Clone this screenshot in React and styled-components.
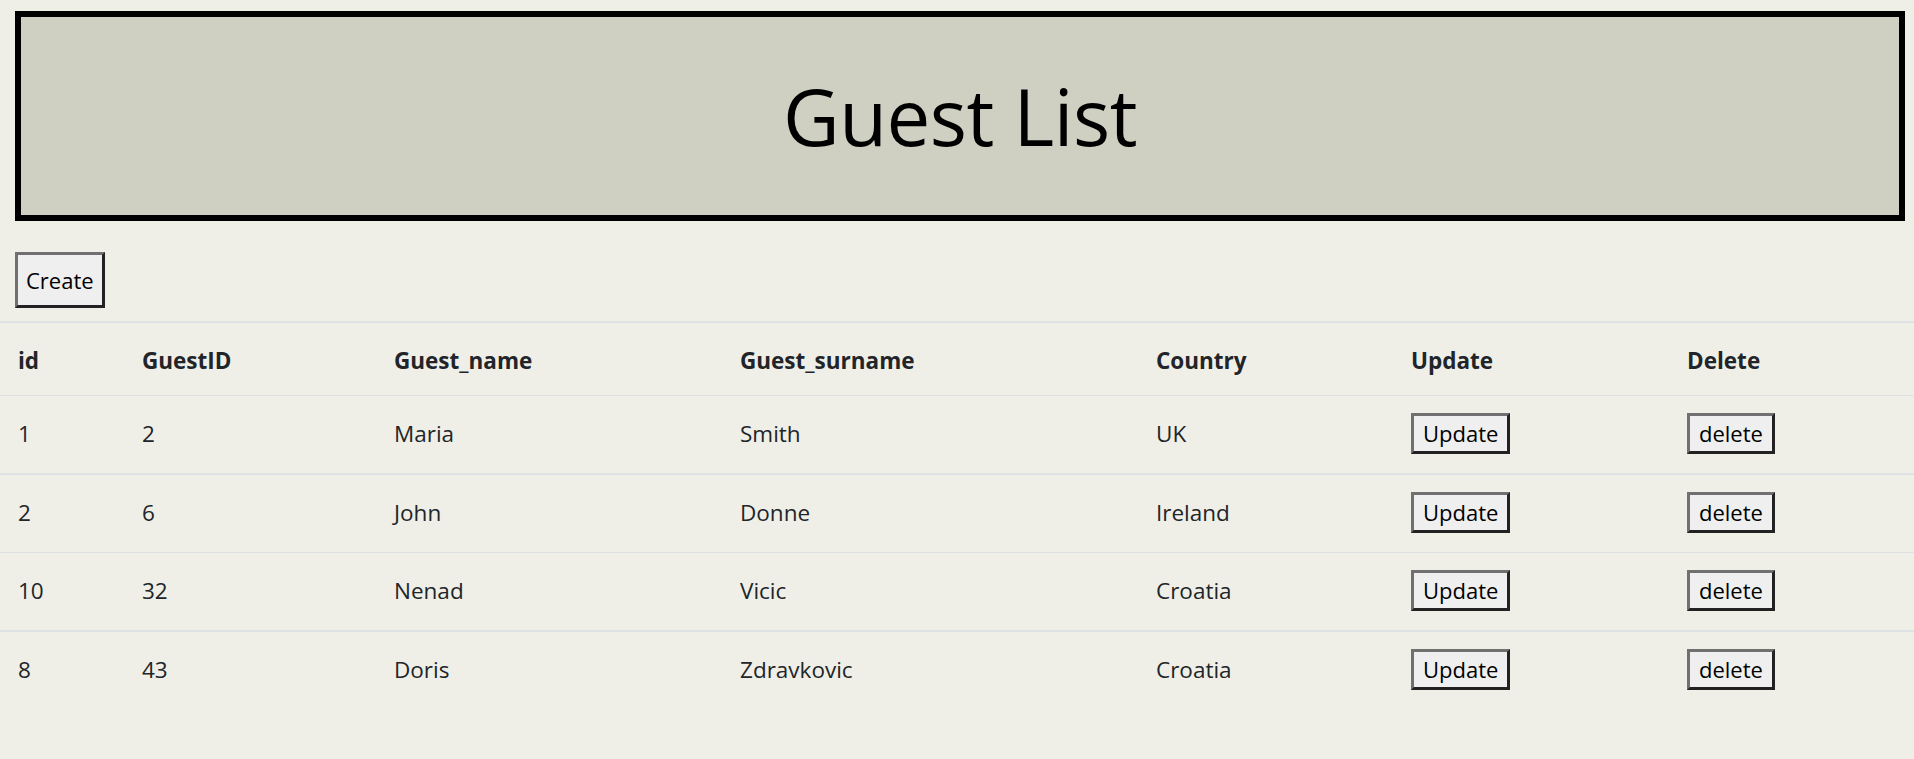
import React from "react";
import styled, { createGlobalStyle } from "styled-components";

const GlobalStyle = createGlobalStyle`
  html, body {
    margin: 0;
    padding: 0;
    background: #efefe8;
  }
  body {
    font-family: "Open Sans", "Noto Sans", sans-serif;
    color: #212529;
  }
`;

const guests = [
  { id: 1, guestId: 2, name: "Maria", surname: "Smith", country: "UK" },
  { id: 2, guestId: 6, name: "John", surname: "Donne", country: "Ireland" },
  { id: 10, guestId: 32, name: "Nenad", surname: "Vicic", country: "Croatia" },
  { id: 8, guestId: 43, name: "Doris", surname: "Zdravkovic", country: "Croatia" },
];

const columns = [
  { label: "id", width: 124 },
  { label: "GuestID", width: 252 },
  { label: "Guest_name", width: 346 },
  { label: "Guest_surname", width: 416 },
  { label: "Country", width: 255 },
  { label: "Update", width: 276 },
  { label: "Delete", width: 245 },
];

const App = () => {
  return (
    <Page>
      <GlobalStyle />
      <Banner>
        <h1>Guest List</h1>
      </Banner>
      <Toolbar>
        <CreateButton>Create</CreateButton>
      </Toolbar>
      <Table>
        <colgroup>
          {columns.map((c) => (
            <col key={c.label} style={{ width: c.width }} />
          ))}
        </colgroup>
        <thead>
          <tr>
            {columns.map((c) => (
              <th key={c.label}>{c.label}</th>
            ))}
          </tr>
        </thead>
        <tbody>
          {guests.map((g) => (
            <tr key={g.id}>
              <td>{g.id}</td>
              <td>{g.guestId}</td>
              <td>{g.name}</td>
              <td>{g.surname}</td>
              <td>{g.country}</td>
              <td>
                <RowButton>Update</RowButton>
              </td>
              <td>
                <RowButton>delete</RowButton>
              </td>
            </tr>
          ))}
        </tbody>
      </Table>
    </Page>
  );
};

const Page = styled.div`
  width: 100%;
  padding-top: 11px;
`;

const Banner = styled.header`
  margin: 0 9px 0 15px;
  height: 198px;
  border: 6px solid #000;
  background: #cfd0c2;
  display: flex;
  align-items: center;
  justify-content: center;
  h1 {
    margin: 0;
    font-family: "Open Sans", "Noto Sans", sans-serif;
    font-weight: 400;
    font-size: 78px;
    color: #000;
    letter-spacing: -0.5px;
  }
`;

const Toolbar = styled.div`
  display: flex;
  padding: 31px 15px 13px 15px;
`;

const Button = styled.button`
  font-family: "Open Sans", "Noto Sans", sans-serif;
  color: #000;
  background: #efefef;
  border: 3px solid;
  border-color: #707070 #222 #222 #707070;
  border-radius: 0;
  cursor: pointer;
  line-height: 1;
`;

const CreateButton = styled(Button)`
  height: 56px;
  padding: 0 8px;
  font-size: 22px;
`;

const RowButton = styled(Button)`
  height: 41px;
  padding: 0 9px;
  font-size: 22px;
`;

const Table = styled.table`
  width: 100%;
  border-collapse: collapse;
  table-layout: fixed;
  font-size: 22.5px;
  border-top: 2px solid #dfe2e4;
  th,
  td {
    text-align: left;
    padding: 0 18px;
    vertical-align: middle;
  }
  th {
    height: 70px;
    font-weight: 700;
    padding-top: 2px;
    border-bottom: 1px solid #dfe2e4;
  }
  td {
    height: 74px;
    padding-bottom: 3px;
    border-bottom: 1px solid #dfe2e4;
  }
  tbody tr:nth-child(odd) td {
    border-bottom-width: 2px;
  }
  tbody tr:last-child td {
    border-bottom: none;
  }
`;

export default App;
